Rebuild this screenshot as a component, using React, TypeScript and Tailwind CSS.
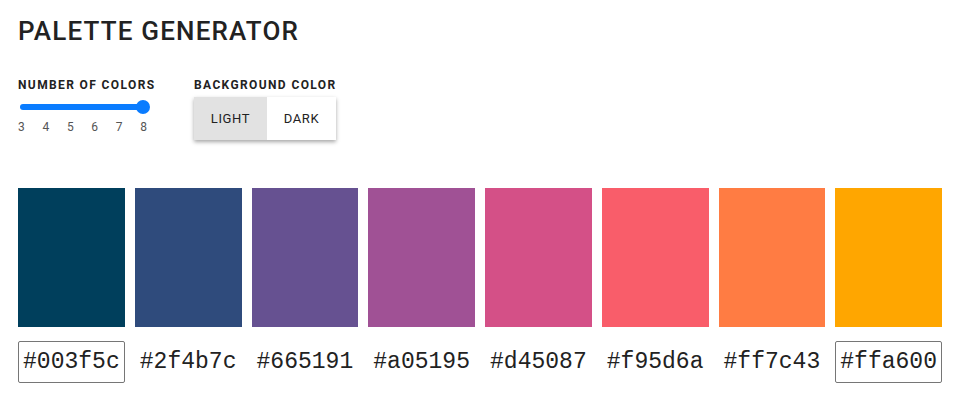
const COLORS = ['#003f5c', '#2f4b7c', '#665191', '#a05195', '#d45087', '#f95d6a', '#ff7c43', '#ffa600'];
const STEPS = [3, 4, 5, 6, 7, 8];

export default function App() {
  return (
    <div className="min-h-screen bg-white pl-[18px] pr-[15px] pt-[16px] text-[#222]" style={{ fontFamily: 'Roboto, "Liberation Sans", sans-serif' }}>
      <h1 className="text-[26px] leading-[30px] font-medium tracking-[0.045em]">PALETTE GENERATOR</h1>

      <div className="mt-[32px] flex gap-[40px]">
        {/* number of colors */}
        <div className="w-[136px]">
          <p className="text-[12px] leading-[14px] font-bold tracking-[0.115em] whitespace-nowrap">NUMBER OF COLORS</p>
          <div className="relative mt-[8px] h-[14px] w-[132px]">
            <div className="absolute left-[2px] right-[6px] top-[4px] h-[6px] rounded-full bg-[#0a7cff]"></div>
            <div className="absolute left-[118px] top-0 w-[14px] h-[14px] rounded-full bg-[#0a7cff]"></div>
          </div>
          <div className="mt-[6px] flex w-[129px] justify-between text-[12px] leading-[14px] text-[#555]">
            {STEPS.map((n) => (
              <span key={n}>{n}</span>
            ))}
          </div>
        </div>

        {/* background color */}
        <div>
          <p className="text-[12px] leading-[14px] font-bold tracking-[0.115em] whitespace-nowrap">BACKGROUND COLOR</p>
          <div className="mt-[5px] flex h-[43px] w-[142px] shadow-[0_2px_4px_rgba(0,0,0,0.35)] text-[13px] tracking-[0.05em]">
            <button className="w-[73px] bg-[#e2e2e2] text-[#222]">LIGHT</button>
            <button className="flex-1 bg-white text-[#222]">DARK</button>
          </div>
        </div>
      </div>

      <div className="mt-[48px] grid grid-cols-8 gap-[10px]">
        {COLORS.map((c) => (
          <div key={c} className="h-[139px]" style={{ backgroundColor: c }}></div>
        ))}
      </div>

      <div className="mt-[14px] grid grid-cols-8 gap-[10px]">
        {COLORS.map((c, i) => (
          <div
            key={c}
            className={`flex h-[42px] items-center justify-center rounded-[2px] border text-[23px] text-[#222] ${i === 0 || i === 7 ? 'border-[#767676]' : 'border-transparent'}`}
            style={{ fontFamily: '"Liberation Mono", monospace' }}
          >
            {c}
          </div>
        ))}
      </div>
    </div>
  );
}
